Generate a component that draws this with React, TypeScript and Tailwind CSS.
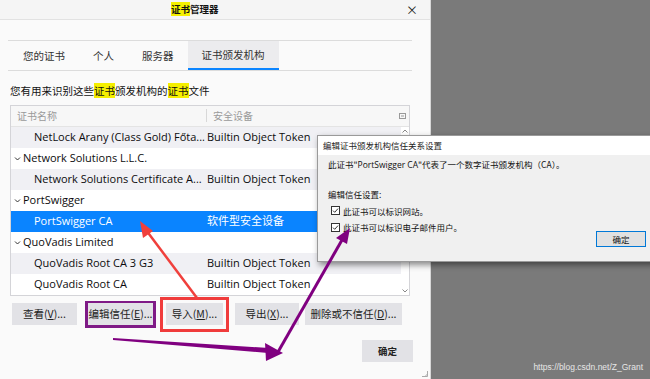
import React from 'react';

const cjk = "font-['Microsoft_YaHei','Noto_Sans_CJK_SC',sans-serif]";
const latin = "font-['Segoe_UI','Open_Sans','Noto_Sans_CJK_SC',sans-serif]";

type Row = { name: string; device?: string; group?: boolean; shade?: boolean; selected?: boolean };

const rows: Row[] = [
  { name: 'NetLock Arany (Class Gold) Főta...', device: 'Builtin Object Token', shade: true },
  { name: 'Network Solutions L.L.C.', group: true },
  { name: 'Network Solutions Certificate A...', device: 'Builtin Object Token', shade: true },
  { name: 'PortSwigger', group: true },
  { name: 'PortSwigger CA', device: '软件型安全设备', selected: true },
  { name: 'QuoVadis Limited', group: true },
  { name: 'QuoVadis Root CA 3 G3', device: 'Builtin Object Token', shade: true },
  { name: 'QuoVadis Root CA', device: 'Builtin Object Token' },
];

function Mark({ children }: { children: React.ReactNode }) {
  return <span className="bg-[#f5ef00]">{children}</span>;
}

function Checkbox() {
  return (
    <svg width="9" height="9" viewBox="0 0 9 9" className="shrink-0">
      <rect x="0.5" y="0.5" width="8" height="8" fill="#fff" stroke="#333" />
      <path d="M2 4.6 L3.7 6.3 L7 2.6" fill="none" stroke="#333" strokeWidth="1" />
    </svg>
  );
}

function TableRow({ r }: { r: Row }) {
  const bg = r.selected ? 'bg-[#0a84ff] text-white' : r.shade ? 'bg-[#f0f0f4] text-[#0c0c0d]' : 'bg-white text-[#0c0c0d]';
  return (
    <div className={`flex h-[21px] items-center text-[11px] ${bg}`}>
      {r.group ? (
        <div className="flex items-center pl-[3px]">
          <svg width="7" height="7" viewBox="0 0 7 7" className="mr-[2px]">
            <path d="M1 2.5 L3.5 5 L6 2.5" fill="none" stroke="#333" strokeWidth="1" />
          </svg>
          <span className={latin}>{r.name}</span>
        </div>
      ) : (
        <>
          <span className={`w-[196px] shrink-0 overflow-hidden pl-[23px] whitespace-nowrap ${latin}`}>{r.name}</span>
          <span className={`whitespace-nowrap ${latin}`}>{r.device}</span>
        </>
      )}
    </div>
  );
}

function Btn({ label, className = '' }: { label: React.ReactNode; className?: string }) {
  return (
    <div className={`flex h-[22px] items-center justify-center bg-[#e2e2e6] text-[10.5px] text-[#222] ${cjk} ${className}`}>
      {label}
    </div>
  );
}

export default function App() {
  return (
    <div className={`relative flex h-[379px] w-[650px] overflow-hidden bg-[#7a7a7a] ${cjk}`}>
      {/* 证书管理器 窗口 */}
      <div className="flex h-full w-[431px] shrink-0 flex-col border-r border-[#d8d8d8] bg-[#fafafa]">
        <div className="flex h-[20px] items-center border-b border-[#e2e2e2] bg-[#f5f5f5]">
          <span className="pl-[171px] text-[9.5px] font-bold text-[#111]">
            <Mark>证书</Mark>管理器
          </span>
          <span className="ml-auto mr-[12px] text-[12px] leading-none text-[#222]">×</span>
        </div>

        {/* tabs */}
        <div className="mx-[8px] mt-[20px] flex h-[31px] w-[404px] items-stretch border-y border-[#dcdcdc] text-[10.5px] text-[#333]">
          <div className="flex items-center pl-[15px] pr-[28px]">您的证书</div>
          <div className="flex items-center pr-[28px]">个人</div>
          <div className="flex items-center pr-[14px]">服务器</div>
          <div className="flex items-center border-b-2 border-[#0a84ff] bg-[#ececee] px-[14px]">证书颁发机构</div>
        </div>

        <div className="ml-[10px] mt-[12px] text-[10.5px] text-[#111]">
          您有用来识别这些<Mark>证书</Mark>颁发机构的<Mark>证书</Mark>文件
        </div>

        {/* 列表 */}
        <div className="ml-[10px] mt-[6px] flex w-[400px] flex-col border border-[#d4d4d8] bg-white">
          <div className="flex h-[21px] items-center border-b border-[#e4e4e4] bg-[#f7f7f7] text-[10px] text-[#9a9a9a]">
            <span className="w-[195px] pl-[6px]">证书名称</span>
            <span className="h-[13px] w-px bg-[#d8d8d8]" />
            <span className="pl-[6px]">安全设备</span>
            <svg width="7" height="6" viewBox="0 0 7 6" className="ml-auto mr-[3px]">
              <rect x="0.5" y="0.5" width="6" height="5" fill="none" stroke="#999" />
              <path d="M2 3 H5" stroke="#999" />
            </svg>
          </div>
          <div className="flex">
            <div className="flex w-[390px] flex-col">
              {rows.map((r) => (
                <TableRow key={r.name} r={r} />
              ))}
            </div>
            <div className="flex flex-1 flex-col items-center justify-between py-[2px]">
              <svg width="6" height="4" viewBox="0 0 6 4">
                <path d="M0.5 3.5 L3 1 L5.5 3.5" fill="none" stroke="#888" />
              </svg>
              <svg width="6" height="4" viewBox="0 0 6 4">
                <path d="M0.5 0.5 L3 3 L5.5 0.5" fill="none" stroke="#888" />
              </svg>
            </div>
          </div>
        </div>

        {/* 按钮 */}
        <div className="ml-[12px] mt-[1px] flex items-center">
          <Btn label={<>查看(<u>V</u>)...</>} className="w-[65px]" />
          <div className="ml-[8px] flex h-[27px] w-[71px] items-center justify-center border-[3px] border-[#7f1a86]">
            <Btn label={<>编辑信任(<u>E</u>)...</>} className="w-[65px]" />
          </div>
          <div className="ml-[4px] flex h-[35px] w-[69px] items-center justify-center border-[3px] border-[#f03c3c]">
            <Btn label={<>导入(<u>M</u>)...</>} className="w-[57px]" />
          </div>
          <Btn label={<>导出(<u>X</u>)...</>} className="ml-[6px] w-[64px]" />
          <Btn label={<>删除或不信任(<u>D</u>)...</>} className="ml-[6px] w-[97px]" />
        </div>

        <div className="mr-[17px] mt-[8px] flex justify-end">
          <div className="flex h-[22px] w-[51px] items-center justify-center bg-[#e2e2e6] text-[9.5px] font-bold text-[#222]">
            确定
          </div>
        </div>
        <div className="mt-auto flex justify-end pb-[2px] pr-[2px]">
          <svg width="6" height="6" viewBox="0 0 6 6">
            <path d="M5.5 0 V5.5 H0 M5.5 3 L3 5.5" fill="none" stroke="#aaa" />
          </svg>
        </div>
      </div>

      {/* 编辑证书颁发机构信任关系设置 对话框 */}
      <div className="absolute left-[317px] top-[135px] flex h-[127px] w-[350px] flex-col border border-[#9a9a9a] bg-[#f0f0f0] shadow-[2px_3px_6px_rgba(0,0,0,0.45)]">
        <div className="flex h-[19px] items-center bg-white pl-[5px] text-[8.5px] text-[#222]">编辑证书颁发机构信任关系设置</div>
        <div className="pl-[10px] pt-[3px] text-[8.5px] text-[#111]">
          <div>
            此证书"<span className={latin}>PortSwigger CA</span>"代表了一个数字证书颁发机构（CA）。
          </div>
          <div className="mt-[16px]">编辑信任设置:</div>
          <div className="mt-[4px] flex items-center gap-[3px] pl-[3px]">
            <Checkbox />
            此证书可以标识网站。
          </div>
          <div className="mt-[4px] flex items-center gap-[3px] pl-[3px]">
            <Checkbox />
            此证书可以标识电子邮件用户。
          </div>
        </div>
        <div className="-mt-[3px] ml-[278px] flex h-[16px] w-[50px] items-center justify-center border border-[#0078d7] bg-[#e1e1e1] text-[8.5px] text-[#111]">
          确定
        </div>
      </div>

      {/* 标注箭头 */}
      <svg className="pointer-events-none absolute left-0 top-0" width="650" height="379" viewBox="0 0 650 379">
        <line x1="197" y1="298" x2="146" y2="230" stroke="#f0403c" strokeWidth="2.5" />
        <polygon points="140,221 143,238 153,231" fill="#f0403c" />
        <polygon points="113,338 113,340 268,353 269,348" fill="#800080" />
        <polygon points="283,353 265,343 266,361" fill="#800080" />
        <line x1="278" y1="352" x2="342" y2="240" stroke="#800080" strokeWidth="3" />
        <polygon points="350,228 336,238 347,244" fill="#800080" />
      </svg>

      <div className="absolute bottom-[5px] right-[7px] font-['Liberation_Sans',sans-serif] text-[8.5px] text-[#e6e6e6]">
        https://blog.csdn.net/Z_Grant
      </div>
    </div>
  );
}
